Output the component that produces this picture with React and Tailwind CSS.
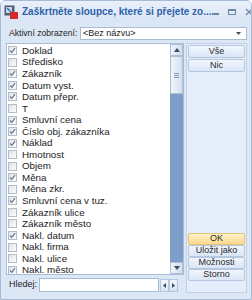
import React from 'react';

const items = [
  ['Doklad', true],
  ['Středisko', false],
  ['Zákazník', true],
  ['Datum vyst.', true],
  ['Datum přepr.', true],
  ['T', false],
  ['Smluvní cena', true],
  ['Číslo obj. zákazníka', true],
  ['Náklad', true],
  ['Hmotnost', false],
  ['Objem', false],
  ['Měna', true],
  ['Měna zkr.', false],
  ['Smluvní cena v tuz.', true],
  ['Zákazník ulice', false],
  ['Zákazník město', false],
  ['Nakl. datum', true],
  ['Nakl. firma', false],
  ['Nakl. ulice', false],
  ['Nakl. město', true],
];

function Check({ checked }) {
  return (
    <span className="w-[9px] h-[9px] border border-[#b3bcc8] bg-gradient-to-br from-[#dfe3e8] to-[#fbfcfd] flex items-center justify-center shrink-0">
      {checked && (
        <svg width="7" height="7" viewBox="0 0 7 7">
          <path d="M1 3.5 L2.8 5.3 L6 1.2" fill="none" stroke="#66768c" strokeWidth="1.2" />
        </svg>
      )}
    </span>
  );
}

function Btn({ children, ok }) {
  return (
    <div
      className={
        'h-[12px] flex items-center justify-center rounded-[2px] border text-[9px] text-[#2a2a2a] ' +
        (ok
          ? 'border-[#e3c27c] bg-gradient-to-b from-[#fff1c8] to-[#fcd98c]'
          : 'border-[#b5c7e0] bg-gradient-to-b from-[#f1f6fc] to-[#dae6f6]')
      }
    >
      {children}
    </div>
  );
}

export default function App() {
  return (
    <div
      className="w-[252px] h-[300px] flex flex-col bg-[#dce7f5] border border-[#a7bbd6] rounded-t-[5px] overflow-hidden"
      style={{ fontFamily: '"Liberation Sans", Arial, sans-serif' }}
    >
      {/* Title bar */}
      <div className="h-[21px] flex items-center pl-[3px] pr-[6px] bg-gradient-to-b from-[#e9f0fa] to-[#d9e5f4] shrink-0">
        <svg width="14" height="14" viewBox="0 0 14 14" className="shrink-0">
          <rect x="0.5" y="0.5" width="10" height="10" fill="#4e5f78" />
          <rect x="2" y="2" width="6" height="6" fill="#c9d6e6" />
          <rect x="6" y="7" width="8" height="7" fill="#d42a2a" />
          <path d="M3 3 L7 7" stroke="#2f6fc0" strokeWidth="1.2" />
        </svg>
        <span className="ml-[4px] text-[10px] font-bold text-[#2f62ab] whitespace-nowrap">
          Zaškrtněte sloupce, které si přejete zo...
        </span>
        <div className="ml-auto flex items-center gap-[9px] text-[#6f83a3]">
          <span className="w-[7px] h-[2px] bg-[#6f83a3] mt-[4px]" />
          <span className="w-[8px] h-[6px] border border-[#6f83a3] border-t-2" />
          <svg width="8" height="8" viewBox="0 0 8 8">
            <path d="M1 1 L7 7 M7 1 L1 7" stroke="#6f83a3" strokeWidth="1.2" />
          </svg>
        </div>
      </div>

      {/* Active view row */}
      <div className="flex items-center mt-[5px] pl-[8px] pr-[4px] shrink-0">
        <span className="text-[8.6px] text-[#222] w-[71px] whitespace-nowrap">Aktivní zobrazení:</span>
        <div className="flex-1 h-[13px] bg-white border border-[#a9bcd6] flex items-center pl-[2px] pr-[5px]">
          <span className="text-[9px] text-[#222]">&lt;Bez názvu&gt;</span>
          <svg width="5" height="3" viewBox="0 0 5 3" className="ml-auto">
            <path d="M0 0 L5 0 L2.5 3 Z" fill="#4a4a4a" />
          </svg>
        </div>
      </div>

      {/* Main area */}
      <div className="flex mt-[3px] pl-[5px] pr-[4px] gap-[2px] flex-1 min-h-0 pb-[6px]">
        <div className="w-[178px] flex flex-col">
          <div className="h-[232px] bg-white border border-[#a9bcd6] flex">
            <div className="flex-1 pl-[1px] pt-[1px] overflow-hidden">
              {items.map(([label, checked]) => (
                <div key={label} className="h-[11.55px] flex items-center gap-[5px]">
                  <Check checked={checked} />
                  <span className="text-[9.8px] text-[#222] whitespace-nowrap leading-none">{label}</span>
                </div>
              ))}
            </div>
            {/* Scrollbar */}
            <div className="w-[13px] flex flex-col bg-[#7f9dc9]">
              <div className="h-[12px] flex items-center justify-center border border-[#aebfd6] bg-gradient-to-r from-[#eef3fa] to-[#d3dfef]">
                <svg width="6" height="4" viewBox="0 0 6 4">
                  <path d="M0 4 L6 4 L3 0 Z" fill="#3b4b63" />
                </svg>
              </div>
              <div className="h-[38px] flex items-center justify-center border border-[#aebfd6] bg-gradient-to-r from-[#f1f5fb] to-[#d4e0ef]">
                <div className="flex flex-col gap-[1px]">
                  <span className="w-[5px] h-px bg-[#8396b3]" />
                  <span className="w-[5px] h-px bg-[#8396b3]" />
                  <span className="w-[5px] h-px bg-[#8396b3]" />
                </div>
              </div>
              <div className="flex-1" />
              <div className="h-[12px] flex items-center justify-center border border-[#aebfd6] bg-gradient-to-r from-[#eef3fa] to-[#d3dfef]">
                <svg width="6" height="4" viewBox="0 0 6 4">
                  <path d="M0 0 L6 0 L3 4 Z" fill="#3b4b63" />
                </svg>
              </div>
            </div>
          </div>

          {/* Search row */}
          <div className="flex items-center mt-[3px] pl-[3px]">
            <span className="text-[9px] text-[#222] w-[30px]">Hledej:</span>
            <div className="w-[120px] h-[14px] bg-white border border-[#a9bcd6]" />
            <div className="flex ml-[1px]">
              <div className="w-[9px] h-[13px] flex items-center justify-center border border-[#b5c7e0] bg-gradient-to-b from-[#f1f6fc] to-[#d7e3f3]">
                <svg width="3" height="5" viewBox="0 0 3 5">
                  <path d="M3 0 L3 5 L0 2.5 Z" fill="#3b4b63" />
                </svg>
              </div>
              <div className="w-[9px] h-[13px] flex items-center justify-center border border-[#b5c7e0] bg-gradient-to-b from-[#f1f6fc] to-[#d7e3f3]">
                <svg width="3" height="5" viewBox="0 0 3 5">
                  <path d="M0 0 L0 5 L3 2.5 Z" fill="#3b4b63" />
                </svg>
              </div>
            </div>
          </div>
        </div>

        {/* Right button panel */}
        <div className="flex-1 flex flex-col border border-[#c0d0e6] bg-[#e4edf9] p-[1px] gap-[1px]">
          <div className="h-[13px] flex items-center justify-center rounded-[2px] border border-[#b5c7e0] bg-gradient-to-b from-[#f1f6fc] to-[#dae6f6] text-[9px] text-[#2a2a2a]">
            Vše
          </div>
          <div className="h-[13px] flex items-center justify-center rounded-[2px] border border-[#b5c7e0] bg-gradient-to-b from-[#f1f6fc] to-[#dae6f6] text-[9px] text-[#2a2a2a]">
            Nic
          </div>
          <div className="mt-auto flex flex-col mb-[10px]">
            <Btn ok>OK</Btn>
            <Btn>Uložit jako</Btn>
            <Btn>Možnosti</Btn>
            <Btn>Storno</Btn>
          </div>
        </div>
      </div>
    </div>
  );
}
